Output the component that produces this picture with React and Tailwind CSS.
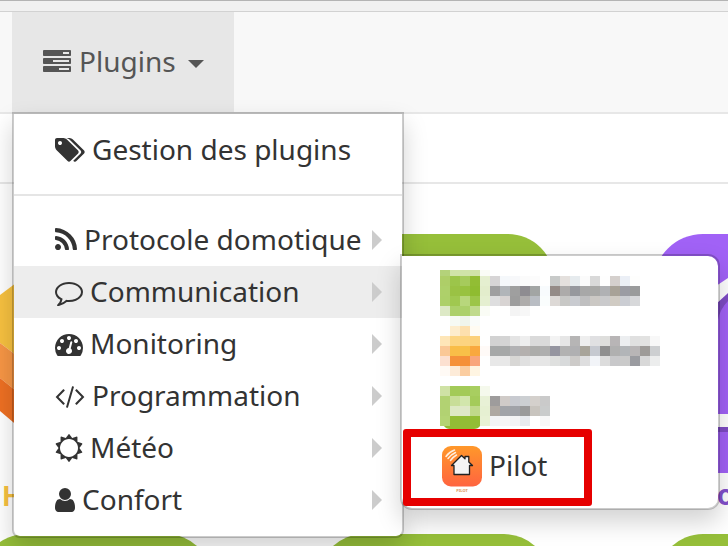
import React from "react";

const ICONS = {
  tasks: {
    box: "0 0 1792 1792",
    d: "M1024 1408h640v-128h-640v128zm-384-512h1024v-128h-1024v128zm640-512h384v-128h-384v128zm512 832v256q0 26-19 45t-45 19h-1664q-26 0-45-19t-19-45v-256q0-26 19-45t45-19h1664q26 0 45 19t19 45zm0-512v256q0 26-19 45t-45 19h-1664q-26 0-45-19t-19-45v-256q0-26 19-45t45-19h1664q26 0 45 19t19 45zm0-512v256q0 26-19 45t-45 19h-1664q-26 0-45-19t-19-45v-256q0-26 19-45t45-19h1664q26 0 45 19t19 45z",
  },
  tags: {
    box: "0 0 1920 1792",
    d: "M448 448q0-53-37.5-90.5t-90.5-37.5-90.5 37.5-37.5 90.5 37.5 90.5 90.5 37.5 90.5-37.5 37.5-90.5zm1067 576q0 53-37 90l-491 492q-39 37-91 37-53 0-90-37l-715-716q-38-37-64.500-101t-26.500-117v-416q0-52 38-90t90-38h416q53 0 117 26.500t102 64.500l715 714q37 39 37 91zm384 0q0 53-37 90l-491 492q-39 37-91 37-36 0-59-14t-53-45l470-470q37-37 37-90 0-52-37-91l-715-714q-38-38-102-64.500t-117-26.500h224q53 0 117 26.500t102 64.500l715 714q37 39 37 91z",
  },
  rss: {
    box: "192 0 1408 1792",
    d: "M576 1344q0 80-56 136t-136 56-136-56-56-136 56-136 136-56 136 56 56 136zm512 123q2 28-17 48-18 21-47 21h-135q-25 0-43-16.5t-20-41.5q-22-229-184.500-391.500t-391.500-184.500q-25-2-41.500-20t-16.500-43v-135q0-29 21-47 17-17 43-17h5q160 13 306 80.500t259 181.500q114 113 181.500 259t80.500 306zm512 2q2 27-18 47-18 20-46 20h-143q-26 0-44.500-17.500t-19.500-42.500q-12-215-101-408.500t-231.500-336-336-231.500-408.500-102q-25-1-42.500-19.500t-17.500-43.500v-143q0-28 20-46 18-18 44-18h3q262 13 501.500 120t425.500 294q187 186 294 425.500t120 501.500z",
  },
  comment: {
    box: "0 0 1792 1792",
    d: "M896 384q-204 0-381.500 69.500t-282 187.500-104.500 255q0 112 71.500 213.500t201.500 175.500l87 50-27 96q-24 91-70 172 152-63 275-171l43-38 57 6q69 8 130 8 204 0 381.500-69.500t282-187.500 104.500-255-104.500-255-282-187.500-381.500-69.500zm896 512q0 174-120 321.500t-326 233-450 85.500q-70 0-145-8-198 175-460 242-49 14-114 22h-5q-15 0-27-10.500t-16-27.500v-1q-3-4-.5-12t2-10 4.500-9.500l6-9 7-8.500 8-9q7-8 31-34.500t34.500-38 31-39.500 32.500-51 27-59 26-76q-157-89-247.500-220t-90.500-281q0-130 71-248.500t191-204.500 286-136.500 348-50.500 348 50.500 286 136.500 191 204.500 71 248.500z",
  },
  gauge: {
    box: "0 0 1792 1792",
    d: "M384 1152q0-53-37.5-90.5t-90.5-37.5-90.5 37.5-37.5 90.5 37.5 90.5 90.5 37.5 90.5-37.5 37.5-90.5zm192-448q0-53-37.5-90.5t-90.5-37.5-90.5 37.5-37.5 90.5 37.5 90.5 90.5 37.5 90.5-37.5 37.5-90.5zm428 481l101-382q6-26-7.5-48.5t-38.5-29.5-48 6.5-30 39.5l-101 382q-60 5-107 43.5t-63 98.5q-20 77 20 146t117 89 146-20 89-117q16-60-6-117t-72-91zm660-33q0-53-37.5-90.5t-90.5-37.5-90.5 37.5-37.5 90.5 37.5 90.5 90.5 37.5 90.5-37.5 37.5-90.5zm-640-640q0-53-37.5-90.5t-90.5-37.5-90.5 37.5-37.5 90.5 37.5 90.5 90.5 37.5 90.5-37.5 37.5-90.5zm448 192q0-53-37.5-90.5t-90.5-37.5-90.5 37.5-37.5 90.5 37.5 90.5 90.5 37.5 90.5-37.5 37.5-90.5zm320 448q0 261-141 483-19 29-54 29h-1402q-35 0-54-29-141-221-141-483 0-182 71-348t191-286 286-191 348-71 348 71 286 191 191 286 71 348z",
  },
  code: {
    box: "0 0 1920 1792",
    d: "M617 1399l-50 50q-10 10-23 10t-23-10l-466-466q-10-10-10-23t10-23l466-466q10-10 23-10t23 10l50 50q10 10 10 23t-10 23l-393 393 393 393q10 10 10 23t-10 23zm591-1067l-373 1291q-4 13-15.5 19.5t-23.5 2.5l-62-17q-13-4-19.5-15.5t-2.5-24.5l373-1291q4-13 15.5-19.5t23.5-2.5l62 17q13 4 19.5 15.5t2.5 24.5zm657 651l-466 466q-10 10-23 10t-23-10l-50-50q-10-10-10-23t10-23l393-393-393-393q-10-10-10-23t10-23l50-50q10-10 23-10t23 10l466 466q10 10 10 23t-10 23z",
  },
  sun: {
    box: "0 0 1792 1792",
    d: "M1472 896q0-117-45.5-223.5t-123-184-184-123-223.5-45.5-223.5 45.5-184 123-123 184-45.5 223.5 45.5 223.5 123 184 184 123 223.5 45.5 223.5-45.5 184-123 123-184 45.5-223.5zm276 277q-4 15-20 20l-292 96v306q0 16-13 26-15 10-29 4l-292-94-180 248q-10 13-26 13t-26-13l-180-248-292 94q-14 6-29-4-13-10-13-26v-306l-292-96q-16-5-20-20-5-17 4-29l180-248-180-248q-9-13-4-29 4-15 20-20l292-96v-306q0-16 13-26 15-10 29-4l292 94 180-248q9-12 26-12t26 12l180 248 292-94q14-6 29 4 13 10 13 26v306l292 96q16 5 20 20 5 16-4 29l-180 248 180 248q9 12 4 29z",
  },
  user: {
    box: "256 0 1280 1792",
    d: "M1536 1399q0 109-62.5 187t-150.5 78h-854q-88 0-150.5-78t-62.5-187q0-85 8.5-160.5t31.5-152 58.500-131 94-89 134.500-34.500q131 128 313 128t313-128q76 0 134.500 34.500t94 89 58.500 131 31.500 152 8.500 160.500zm-256-887q0 159-112.500 271.500t-271.500 112.500-271.500-112.500-112.500-271.500 112.500-271.500 271.500-112.500 271.500 112.500 112.500 271.500z",
  },
};

function Icon({ name, className }) {
  const icon = ICONS[name];
  return (
    <svg viewBox={icon.box} fill="currentColor" className={"h-7 shrink-0 overflow-visible " + className}>
      <path d={icon.d} />
    </svg>
  );
}

const CATEGORIES = [
  { icon: "rss", size: "w-[22px]", label: "Protocole domotique" },
  { icon: "comment", size: "w-7", label: "Communication", active: true },
  { icon: "gauge", size: "w-7", label: "Monitoring" },
  { icon: "code", size: "w-[30px]", label: "Programmation" },
  { icon: "sun", size: "w-7", label: "Météo" },
  { icon: "user", size: "w-5", label: "Confort" },
];

function MenuRow({ icon, size, label, active, arrow }) {
  return (
    <li className={"flex h-[52px] items-center pl-[41px] pr-5 " + (active ? "bg-[#ededed]" : "")}>
      <Icon name={icon} className={size} />
      <span className="mb-0.5 ml-[7px] whitespace-nowrap leading-10">{label}</span>
      {arrow && (
        <span className="ml-auto border-y-[10px] border-l-[10px] border-y-transparent border-l-[#cccccc]" />
      )}
    </li>
  );
}

/* Each strip: [y, height, colours of the 10px cells from x = 0; "-" leaves a gap] */
const MOSAICS = [
  [
    [4, 6, "b4d27a d0e3a8 d0e3a8 d0e3a8 fafcf6"],
    [10, 10, "aece68 9cc54a a6cb5c 92bd34 e5efd0 d7d5d6 f5f8fb f7f8fa fbfbfb fcfcfc - c8cac9 e4e0dd e6ebee fbfbfb d9d9d9 fefefe d5d0cd ebeff6 fefefd"],
    [20, 10, "aed06a 9ac244 98c240 8fbc30 e3edcc 9f9fa0 b1b5b9 9f9f9f 8e8c91 a2a5a4 f8fbfd 948b87 adabaa 96989e a8a8a8 a8a8a6 b0b1b4 a8a297 9b9ca4 9a9b9b"],
    [30, 10, "add069 a0c850 b8d77c 9cc548 e5efd0 dededf d8d4d3 9d9d9d aeacab b9bdc3 fafdfd ddd9d6 c8c8c6 c9cbd0 bfbfc0 cbc8c4 cacacc d0cbc3 cbcdd3 d7d8da"],
    [40, 10, "dde9c6 acd06a acd06a c0da8c fafcf5 - - f4f4f4 f7f7f7"],
    [50, 10, "- f6faf4 f0f5ec fafcfa"],
  ],
  [
    [2, 10, "- fdedcd fde0ae fffbf2"],
    [12, 10, "fee6b8 fcd582 fcd480 fcd07a - d2d2d2 d4d4d4 e4e4e4 eeeeee dadada dadada f3f3f3 e6e6e6 b6b5b5 eeeeee e0e0e2 dededc b8b5b6 eceef0 e0e0e0 e2e2e1 f8f8f8"],
    [22, 10, "fac896 f9bd48 f8c048 f9a83f fffaf7 a6a8a8 a6a8a8 b2b2b4 b4b0ae acacaa aeaeae 9595a0 b2b2b2 b0b0b2 a8a49a c6c9d0 8f8f8f b0b0b0 b2b5b8 b8b5b6 9e9b98 cdcfd1"],
    [32, 10, "fce0d0 f5913a f59038 f9a67c - e8e8e8 e8e8e8 d8d7d5 e0e0e0 e6e6e6 e6e6e6 dfe0df d8dadb cdcbc9 dededf f2f4f8 dcdcdc c8c8ca cacaca 9a9ba0 d8d8d8 eceded"],
    [42, 10, "fffaf5 fdebd8 fbcda0 fff5e2"],
  ],
  [
    [4, 10, "cfe2a5 a3ca58 a3ca58 a8ce60 f5f9ec"],
    [14, 10, "b2d272 c8de98 d2e6ac a4cb5a e8f1d6 9e9c9c d0cbc8 c8cad0 cccfd2 d4d0cc cacaca"],
    [24, 10, "b2d272 dde9c4 dfe8c8 c0d98a e6f0d2 aea8a2 a2a4a8 a0a2a8 9a9a9a c8c4be cacccc"],
    [34, 10, "b4d474 92bd35 92bd35 92bd35 e8f1d4 f3f4f6 f6f6f6 f3f3f5 e8eaee - f8f8f8"],
  ],
];

function Mosaic({ strips, rounded }) {
  return (
    <svg viewBox="0 0 240 58" className="h-[58px] w-60 overflow-visible" shapeRendering="crispEdges">
      {strips.map(([y, h, cells]) =>
        cells.split(" ").map((c, i) =>
          c === "-" ? null : <rect key={y + "-" + i} x={i * 10} y={y} width="10" height={h} fill={"#" + c} />
        )
      )}
      {rounded && <path d="M4 44h36q-2 3-6 3H10q-4 0-6-3z" fill="#92bd35" shapeRendering="auto" />}
    </svg>
  );
}

function PilotLogo() {
  return (
    <svg viewBox="0 0 42 50" className="ml-px mt-0.5 h-[50px] w-[42px]">
      <defs>
        <linearGradient id="pilot" x1="0" y1="0" x2="0" y2="1">
          <stop offset="0" stopColor="#ff982a" />
          <stop offset="1" stopColor="#ff6440" />
        </linearGradient>
      </defs>
      <rect x="1" y="1" width="40" height="40.500" rx="9" fill="url(#pilot)" />
      <g fill="none" stroke="#ffeedd" strokeWidth="1.500" strokeLinecap="round">
        <path d="M5 11.500Q8 7 13.500 5" />
        <path d="M7 13.500Q10 9.500 14.500 7.500" />
        <path d="M9.500 15.500Q12 12 15.500 10" />
      </g>
      <path
        d="M10.500 20.500L20.500 10.500L24 13.800V11.500H27.800V17L31.500 20.500H28.500V29.500H13V20.500Z"
        fill="#f4f4f4"
        stroke="#222222"
        strokeWidth="1.300"
        strokeLinejoin="round"
      />
      <text x="21" y="47" textAnchor="middle" fontSize="4" fontWeight="700" fill="#dc9560" fontFamily="Noto Sans, sans-serif">
        PILOT
      </text>
    </svg>
  );
}

/* Plugin logos of the market page, mostly hidden behind the menus */
function Artwork() {
  return (
    <svg viewBox="0 184 728 362" className="block h-[362px] w-[728px]">
      <rect x="320" y="234" width="234" height="240" rx="46" fill="#96bf3a" />
      <rect x="-20" y="534" width="232" height="100" rx="46" fill="#96bf3a" />
      <rect x="318" y="534" width="232" height="100" rx="46" fill="#96bf3a" />
      <rect x="657" y="534" width="232" height="100" rx="46" fill="#96bf3a" />
      <rect x="653" y="234" width="219" height="239" rx="50" fill="#a162f6" />
      <path d="M716 304L728 293V301Q720 309 718 320H716z" fill="#7e4cc4" />
      <path d="M716 286L728 278V293L716 304z" fill="#ffffff" />
      <rect x="716" y="414" width="12" height="13" fill="#ffffff" />
      <rect x="716" y="427" width="12" height="5" fill="#7e4cc4" />
      <path d="M0 295L20 280V358L0 343z" fill="#f7c140" />
      <path d="M0 343L20 358V394L0 378z" fill="#f79645" />
      <path d="M0 378L20 394V428L0 411z" fill="#ee7023" />
      <text x="2.500" y="506" fontSize="27" fontWeight="700" fill="#f7c140" fontFamily="Inter, sans-serif">H</text>
      <text x="717" y="505" fontSize="28" fontWeight="700" fill="#8250cc" fontFamily="Inter, sans-serif">o</text>
    </svg>
  );
}

export default function App() {
  return (
    <div className="relative h-[546px] w-[728px] overflow-hidden bg-white font-['Noto_Sans',sans-serif] text-[28px] text-[#333333]">
      <div className="h-3 border-b border-t border-b-[#d2d2d2] border-t-[#b4b4b4] bg-[#f1f1f1]" />
      <nav className="flex h-[102px] border-b-2 border-[#e7e7e7] bg-[#f8f8f8] pl-3">
        <a className="flex h-[100px] w-[222px] items-center bg-[#e7e7e7] pl-[31px] text-[#555555]">
          <Icon name="tasks" className="w-7" />
          <span className="mb-0.5 ml-2 leading-10">Plugins</span>
          <span className="ml-3 mt-1 border-x-8 border-t-8 border-x-transparent border-t-[#555555]" />
        </a>
      </nav>
      <div className="h-[70px] border-b-2 border-[#e7e7e7]" />
      <Artwork />

      <ul className="absolute left-3 top-28 w-[392px] rounded-b-lg border-2 border-black/20 bg-white bg-clip-padding py-2.5 shadow-[0_12px_24px_rgba(0,0,0,0.175)]">
        <MenuRow icon="tags" size="w-[30px]" label="Gestion des plugins" />
        <li className="my-[18px] h-0.5 bg-[#e5e5e5]" />
        {CATEGORIES.map((c) => (
          <MenuRow key={c.label} {...c} arrow />
        ))}
      </ul>

      <ul className="absolute left-[400px] top-[254px] h-64 w-80 rounded-xl rounded-tl-none border-2 border-black/20 bg-white bg-clip-padding py-2.5 pl-[38px] shadow-[0_12px_24px_rgba(0,0,0,0.175)]">
        {MOSAICS.map((strips, i) => (
          <li key={i} className="h-[58px]">
            <Mosaic strips={strips} rounded={i === 2} />
          </li>
        ))}
        <li className="flex h-[58px] items-center">
          <PilotLogo />
          <span className="-mt-2 ml-1.5 leading-10">Pilot</span>
        </li>
      </ul>
      <div className="absolute left-[403px] top-[429px] h-[77px] w-[189px] rounded-[3px] border-8 border-[#e60000]" />
    </div>
  );
}
